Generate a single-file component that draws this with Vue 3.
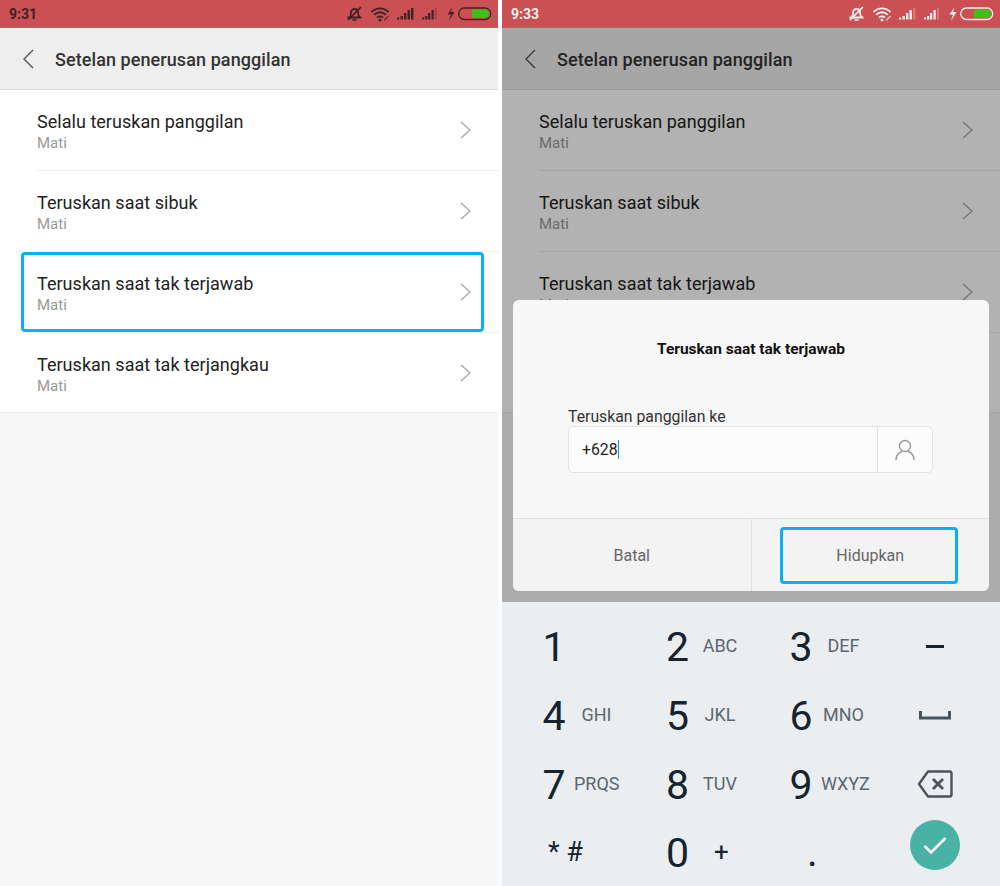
<script setup>
const rows = [
  { title: 'Selalu teruskan panggilan' },
  { title: 'Teruskan saat sibuk' },
  { title: 'Teruskan saat tak terjawab', marked: true },
  { title: 'Teruskan saat tak terjangkau' }
]

const phones = [
  { time: '9:31', dialog: false },
  { time: '9:33', dialog: true }
]

const keys = [
  { digit: '1', letters: '' },
  { digit: '2', letters: 'ABC' },
  { digit: '3', letters: 'DEF' },
  { icon: 'minus' },
  { digit: '4', letters: 'GHI' },
  { digit: '5', letters: 'JKL' },
  { digit: '6', letters: 'MNO' },
  { icon: 'space' },
  { digit: '7', letters: 'PRQS' },
  { digit: '8', letters: 'TUV' },
  { digit: '9', letters: 'WXYZ' },
  { icon: 'back' },
  { symbols: '* #' },
  { digit: '0', plus: '+' },
  { dot: '.' },
  { icon: 'ok' }
]
</script>

<template>
  <div class="page">
    <section v-for="phone in phones" :key="phone.time" class="phone" :class="{ 'phone-dim': phone.dialog }">
      <div class="status">
        <span class="time">{{ phone.time }}</span>
        <svg class="status-icons" width="146" height="16" viewBox="0 0 146 16" fill="none" stroke="currentColor">
          <!-- bell, muted -->
          <path d="M1.500 11.500h14M4 11c1-1.500 1-3 1-4.500S6.500 3 8.500 3 12 4.500 12 6.500s0 3 1.500 4.500" stroke-width="1.800" />
          <path d="M6.500 14h4M2 14L15 1" stroke-width="1.700" />
          <!-- wifi -->
          <path d="M25.500 6c5-4.800 12-4.800 17 0M28.200 8.800c3.600-3.100 8-3.100 11.600 0M31 11.500c2-1.500 4-1.500 6 0" stroke-width="1.800" />
          <circle cx="34" cy="14" r="1.500" fill="currentColor" stroke="none" />
          <path d="M38 14.500l4.500-4.500" stroke-width="1.700" opacity=".6" />
          <!-- signal 1 -->
          <g fill="currentColor" stroke="none">
            <rect x="51" y="11.500" width="2.200" height="2" />
            <rect x="54.500" y="10" width="2.400" height="3.500" />
            <rect x="58" y="7" width="2.400" height="6.500" />
            <rect x="61.500" y="4" width="2.400" height="9.500" />
            <rect x="65" y="2" width="2.400" height="11.500" :opacity="phone.dialog ? 0.25 : 1" />
          </g>
          <!-- signal 2 -->
          <g fill="currentColor" stroke="none">
            <rect x="76" y="11.500" width="2" height="2" />
            <rect x="79" y="10" width="2.200" height="3.500" />
            <rect x="82" y="7" width="2.200" height="6.500" />
            <rect x="85.500" y="4" width="2.200" height="9.500" />
            <rect x="89" y="2" width="1.800" height="11.500" opacity=".3" />
          </g>
          <!-- charging bolt -->
          <path d="M106.500 1l-5 7.500h3.500l-2 6.500 5.500-9h-3.500z" fill="currentColor" stroke="none" />
          <!-- battery -->
          <rect x="112.700" y="2" width="32" height="11.500" rx="5.700" stroke-width="1.300" />
          <path d="M126 3.500h13.500a4.300 4.300 0 0 1 0 8.500H126z" fill="#3fbf1a" stroke="none" />
        </svg>
      </div>

      <div class="screen">
        <header class="bar">
          <svg class="back" width="12" height="20" viewBox="0 0 12 20" fill="none">
            <path d="M11 1L2 10l9 9" stroke="#555" stroke-width="1.400" />
          </svg>
          <h1>Setelan penerusan panggilan</h1>
        </header>

        <ul class="list">
          <li v-for="row in rows" :key="row.title" class="row">
            <div class="row-text">
              <div class="row-title">{{ row.title }}</div>
              <div class="row-sub">Mati</div>
            </div>
            <svg class="chevron" width="11" height="18" viewBox="0 0 11 18" fill="none">
              <path d="M1 1l9 8-9 8" stroke="#a9a9a9" stroke-width="1.400" />
            </svg>
            <span v-if="row.marked && !phone.dialog" class="mark-row"></span>
          </li>
        </ul>

        <div v-if="phone.dialog" class="overlay">
          <div class="dialog">
            <h2>Teruskan saat tak terjawab</h2>
            <div class="field">
              <label>Teruskan panggilan ke</label>
              <div class="input">
                <div class="value"><span>+628</span><i class="caret"></i></div>
                <div class="pick">
                  <svg width="20" height="22" viewBox="0 0 20 22" fill="none" stroke="#9a9a9a" stroke-width="1.400">
                    <circle cx="10" cy="7" r="5.500" />
                    <path d="M1 21c0-5 3-7.500 6-8.500M19 21c0-5-3-7.500-6-8.500" />
                  </svg>
                </div>
              </div>
            </div>
            <div class="actions">
              <button class="action">Batal</button>
              <button class="action action-on">Hidupkan<span class="mark-btn"></span></button>
            </div>
          </div>
        </div>
      </div>

      <div v-if="phone.dialog" class="keypad">
        <div v-for="(k, i) in keys" :key="i" class="key">
          <template v-if="k.digit">
            <span class="digit">{{ k.digit }}</span>
            <span v-if="k.letters" class="letters">{{ k.letters }}</span>
            <span v-if="k.plus" class="plus">{{ k.plus }}</span>
          </template>
          <span v-else-if="k.symbols" class="symbols">{{ k.symbols }}</span>
          <span v-else-if="k.dot" class="dot">{{ k.dot }}</span>
          <div v-else class="key-icon">
            <span v-if="k.icon === 'minus'" class="minus"></span>
            <svg v-if="k.icon === 'space'" width="32" height="9" viewBox="0 0 32 9" fill="none">
              <path d="M1.500 0v7h29V0" stroke="#47545d" stroke-width="3" />
            </svg>
            <svg v-if="k.icon === 'back'" width="36" height="28" viewBox="0 0 36 28" fill="none" stroke="#47545d" stroke-width="2.400">
              <path d="M11 1.500h21.500a2 2 0 0 1 2 2v21a2 2 0 0 1-2 2H11L2 14z" stroke-linejoin="round" />
              <path d="M16 9l10 10M26 9L16 19" stroke-width="2.800" />
            </svg>
            <span v-if="k.icon === 'ok'" class="ok">
              <svg width="24" height="19" viewBox="0 0 24 19" fill="none">
                <path d="M1.500 10l6.500 6.500L22.500 2" stroke="#fff" stroke-width="2.600" />
              </svg>
            </span>
          </div>
        </div>
      </div>
    </section>
  </div>
</template>

<style>
html, body {
  margin: 0;
  background: #fff;
}
</style>

<style scoped>
.page {
  width: 1000px;
  height: 886px;
  display: flex;
  justify-content: space-between;
  overflow: hidden;
  font-family: Roboto, "Liberation Sans", sans-serif;
}

.phone {
  width: 498px;
  height: 886px;
  display: flex;
  flex-direction: column;
  overflow: hidden;
}

.status {
  height: 27px;
  flex: none;
  background: #cb5053;
  border-bottom: 1px solid #d3555b;
  display: flex;
  align-items: center;
  justify-content: space-between;
  padding: 0 6px 0 9px;
  color: #3d2324;
}

.phone-dim .status {
  color: #fbeeee;
}

.time {
  font-size: 14px;
  font-weight: 700;
}

.status-icons {
  display: block;
  margin-top: 1px;
}

.screen {
  flex: 1;
  position: relative;
  background: #f7f7f7;
}

.bar {
  height: 61px;
  background: #eee;
  border-bottom: 1px solid #dcdcdc;
  display: flex;
  align-items: center;
  padding-left: 22px;
}

.back {
  display: block;
}

.bar h1 {
  margin: 2px 0 0 21px;
  font-size: 18px;
  font-weight: 500;
  letter-spacing: 0.08px;
  color: #333;
}

.list {
  margin: 0;
  padding: 0;
  list-style: none;
  background: #fff;
}

.row {
  position: relative;
  height: 81px;
  box-sizing: border-box;
  margin-left: 37px;
  padding: 20px 27px 0 0;
  border-bottom: 1px solid #eee;
  display: flex;
  justify-content: space-between;
}

.row:last-child {
  height: 80px;
  margin-left: 0;
  padding-left: 37px;
}

.row-title {
  font-size: 18px;
  line-height: 23px;
  letter-spacing: 0.03px;
  color: #222;
}

.row-sub {
  font-size: 15px;
  line-height: 20px;
  color: #999;
}

.chevron {
  margin-top: 11px;
}

.mark-row {
  position: absolute;
  left: -16px;
  top: 0;
  width: 463px;
  height: 80px;
  box-sizing: border-box;
  border: 3px solid #0cb0f0;
  border-radius: 4px;
}

.overlay {
  position: absolute;
  inset: 0;
  background: rgba(0, 0, 0, 0.3);
  display: flex;
  flex-direction: column;
  justify-content: flex-end;
  padding: 0 11px 11px;
}

.dialog {
  height: 291px;
  background: #f7f7f7;
  border-radius: 6px;
  overflow: hidden;
  display: flex;
  flex-direction: column;
}

.dialog h2 {
  margin: 40px 0 0;
  font-size: 15.5px;
  line-height: 18px;
  font-weight: 700;
  color: #111;
  text-align: center;
}

.field {
  margin: 49px 56px 0 55px;
}

.field label {
  display: block;
  font-size: 15.8px;
  line-height: 19px;
  color: #333;
}

.input {
  height: 47px;
  box-sizing: border-box;
  background: #fcfcfc;
  border: 1px solid #e2e2e2;
  border-radius: 5px;
  display: flex;
}

.value {
  flex: 1;
  display: flex;
  align-items: center;
  padding-left: 13px;
  font-size: 15.8px;
  color: #222;
}

.caret {
  display: block;
  width: 1px;
  height: 19px;
  background: #1b8fe0;
}

.pick {
  width: 54px;
  border-left: 1px solid #e2e2e2;
  display: flex;
  align-items: center;
  justify-content: center;
}

.actions {
  margin-top: auto;
  height: 73px;
  box-sizing: border-box;
  border-top: 1px solid #e4e4e4;
  background: #f3f3f3;
  display: flex;
}

.action {
  position: relative;
  flex: 1;
  border: 0;
  padding: 0;
  background: transparent;
  font-family: inherit;
  font-size: 16px;
  color: #666;
}

.action-on {
  border-left: 1px solid #e0e0e0;
}

.mark-btn {
  position: absolute;
  left: 28px;
  right: 31px;
  top: 8px;
  bottom: 7px;
  border: 3px solid #0cb0f0;
  border-radius: 4px;
}

.keypad {
  height: 284px;
  flex: none;
  box-sizing: border-box;
  background: #ebeef1;
  padding: 10px 0 0 32px;
  display: grid;
  grid-template-columns: repeat(3, 123.5px) 61px;
  grid-auto-rows: 68.7px;
}

.key {
  display: flex;
  align-items: center;
}

.digit {
  width: 40px;
  flex: none;
  margin-top: 2px;
  text-align: center;
  font-size: 41px;
  font-weight: 400;
  color: #14232e;
}

.letters {
  width: 45px;
  flex: none;
  text-align: center;
  font-size: 18px;
  line-height: 22px;
  color: #5b666e;
  white-space: nowrap;
}

.plus {
  width: 48px;
  flex: none;
  text-align: center;
  font-size: 26px;
  color: #14232e;
}

.symbols {
  margin-left: 14px;
  font-size: 27px;
  color: #14232e;
  white-space: pre;
}

.dot {
  margin: 0 0 0 26px;
  font-size: 41px;
  color: #14232e;
}

.key-icon {
  width: 100%;
  display: flex;
  align-items: center;
  justify-content: center;
}

.minus {
  display: block;
  width: 18px;
  height: 3px;
  background: #14232e;
}

.ok {
  width: 50px;
  height: 50px;
  margin-bottom: 14px;
  border-radius: 50%;
  background: #48b3a5;
  display: flex;
  align-items: center;
  justify-content: center;
}
</style>
